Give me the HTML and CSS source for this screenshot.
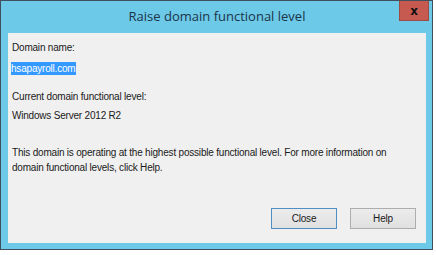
FILE: index.html
```html
<!DOCTYPE html>
<html>
<head>
  <meta charset="UTF-8">
  <title>Raise domain functional level</title>
  <link rel="stylesheet" href="styles.css">
</head>
<body>
  <div class="window">
    <div class="titlebar">
      <span class="title">Raise domain functional level</span>
      <button type="button" class="close-x">x</button>
    </div>
    <div class="panel">
      <div class="label">Domain name:</div>
      <div class="value first"><span class="selected">hsapayroll.com</span></div>
      <div class="label">Current domain functional level:</div>
      <div class="value">Windows Server 2012 R2</div>
      <p class="info">This domain is operating at the highest possible functional level. For more information on domain functional levels, click Help.</p>
      <div class="buttons">
        <button type="button" class="btn default">Close</button>
        <button type="button" class="btn">Help</button>
      </div>
    </div>
  </div>
</body>
</html>
```

FILE: styles.css
```css
body {
  margin: 0;
  background: #fff;
  font-family: "Liberation Sans", Arial, sans-serif;
}
.window {
  width: 418px;
  height: 242px;
  padding: 0 6px 6px 7px;
  background: #6cc9e8;
  border: 1px solid #40505e;
  display: flex;
  flex-direction: column;
}
.titlebar {
  height: 32px;
  flex-shrink: 0;
  position: relative;
  display: flex;
  align-items: center;
  justify-content: center;
}
.title {
  font-family: "Open Sans", sans-serif;
  font-size: 13px;
  color: #1c3448;
  margin-top: -2px;
}
.close-x {
  position: absolute;
  top: 0;
  right: -3px;
  width: 30px;
  height: 20px;
  padding: 0;
  border: 1px solid #9e4b44;
  border-top: none;
  background: #c75a50;
  color: #111;
  font-family: "DejaVu Sans", sans-serif;
  font-weight: bold;
  font-size: 12px;
  line-height: 16px;
}
.panel {
  flex: 1;
  background: #f0f0f0;
  padding: 7px 4px 0 4px;
  display: flex;
  flex-direction: column;
  font-size: 10px;
  letter-spacing: -0.2px;
  color: #1a1a1a;
}
.label {
  line-height: 15px;
}
.value {
  line-height: 15px;
  padding-top: 4px;
}
.value.first {
  padding-top: 6px;
  padding-bottom: 13px;
}
.selected {
  background: #3399ff;
  color: #fff;
  padding: 1px 1px 1px 0;
  margin-left: -1px;
}
.info {
  margin: 22px 0 0;
  line-height: 15px;
  width: 390px;
}
.buttons {
  margin-top: auto;
  margin-bottom: 14px;
  display: flex;
  justify-content: flex-end;
  gap: 13px;
  padding-right: 6px;
}
.btn {
  width: 66px;
  height: 21px;
  padding: 0;
  font-family: "Liberation Sans", Arial, sans-serif;
  font-size: 10px;
  letter-spacing: -0.2px;
  color: #1a1a1a;
  background: linear-gradient(#ececec, #e0e0e0);
  border: 1px solid #adadad;
}
.btn.default {
  border-color: #4f8fc4;
}
```
